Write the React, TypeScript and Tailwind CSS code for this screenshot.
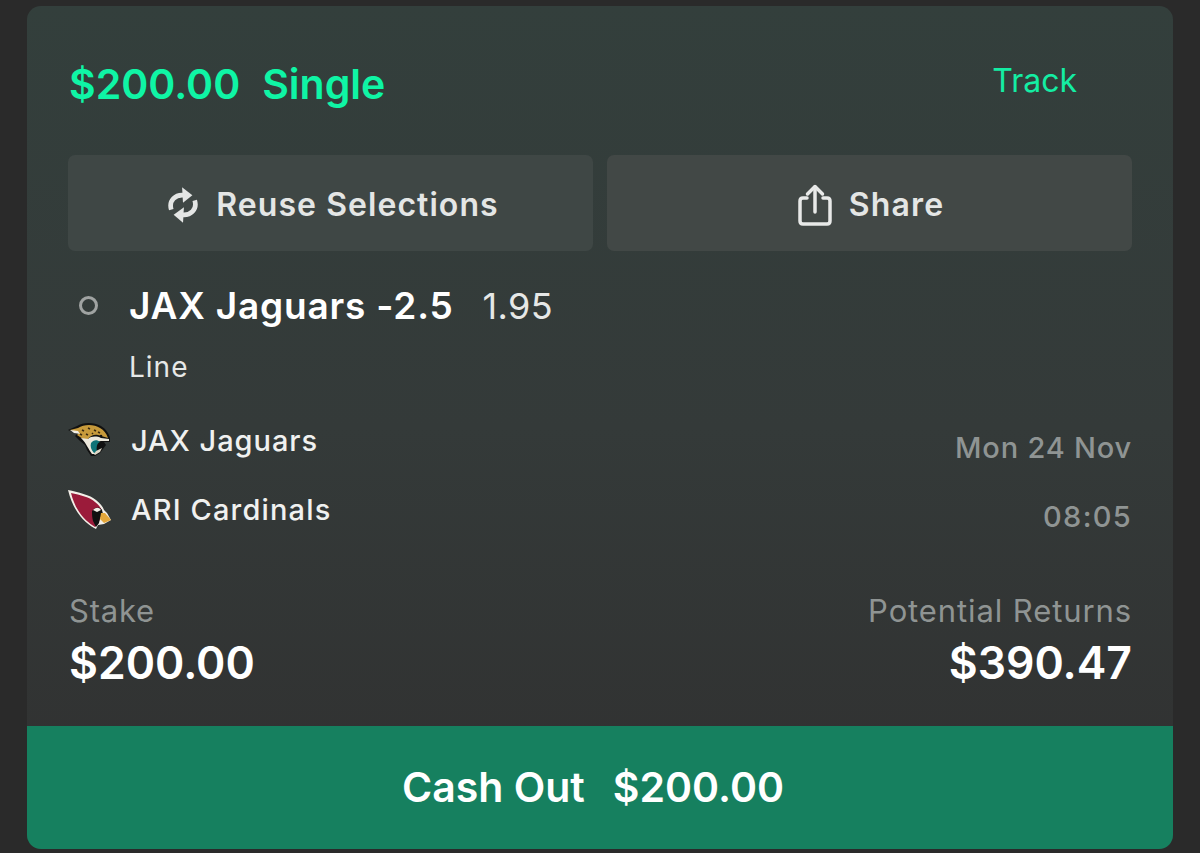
import React from "react";

function Jaguar() {
  return (
    <svg width="44" height="38" viewBox="0 0 44 38" className="shrink-0">
      <path d="M0 9 L9 5 C15 1 26 1 33 5 C38 8 41 13 42 17 L42 21 L36 21 L38 24 L35 28 L32 32 L27 35 L23 35 L19 29 L17 24 L12 20 L7 15 L9 13 Z" fill="#111" />
      <path d="M2 9 L10 7 C16 3 26 3 32 7 C36 9 38 12 40 17 L30 14 C26 13 22 15 20 18 L15 18 L9 14 L11 12 Z" fill="#c79a3b" />
      <path d="M14 9 l2 1 M20 7 l2 1 M26 9 l2 1 M30 11 l2 1 M18 13 l2 1 M24 12 l1 1 M12 13 l2 1" stroke="#3a2a10" strokeWidth="1.6" />
      <path d="M2 9 L10 10 L12 13 L6 12 Z" fill="#f2efe6" />
      <path d="M13 17 L20 18 C23 15 29 15 33 17 L41 18 L41 20 L33 20 C29 20 27 23 27 27 L27 33 L24 33 C20 28 19 23 13 17 Z" fill="#ece8dc" />
      <path d="M23 22 C25 19 29 18 32 21 C29 22 28 26 29 31 L26 32 C23 29 22 25 23 22 Z" fill="#0f7377" />
      <path d="M26 33 L28 30 L34 27 L32 31 L27 34 Z" fill="#ddd8c8" />
      <circle cx="33" cy="15" r="1.3" fill="#111" />
    </svg>
  );
}

function Cardinal() {
  return (
    <svg width="44" height="40" viewBox="0 0 44 40" className="shrink-0">
      <path d="M0 1 C10 3 22 6 28 11 C32 14 35 18 36 21 L39 24 L43 31 L36 35 L30 36 L28 40 C20 36 6 26 0 1 Z" fill="#f3efe8" />
      <path d="M3 4 C12 6 22 8 27 13 C31 16 33 19 34 22 L32 30 L30 35 L27 38 C19 33 8 24 3 4 Z" fill="#9b1b3a" />
      <path d="M24 22 C28 17 32 18 34 21 L35 25 L32 29 L31 34 L28 38 L25 32 C24 28 24 25 24 22 Z" fill="#111" />
      <path d="M25 21 C28 18 31 18 33 21 L29 23 Z" fill="#f3efe8" />
      <path d="M33 24 L37 24 L43 31 L36 34 L32 30 Z" fill="#e4a73a" />
    </svg>
  );
}

function Reuse() {
  return (
    <svg width="30" height="40" viewBox="0 0 32 40" className="shrink-0" fill="none" stroke="#e4e6e5" strokeWidth="5">
      <path d="M3.500 25 C0.500 15 8 8.500 17 9.500" />
      <path d="M28.500 15 C31.500 25 24 31.500 15 30.500" />
      <path d="M15 1 L26 9.500 L16 17.500 Z" fill="#e4e6e5" stroke="none" />
      <path d="M17 22.500 L6 30.500 L16 39 Z" fill="#e4e6e5" stroke="none" />
    </svg>
  );
}

function ShareIcon() {
  return (
    <svg width="34" height="42" viewBox="0 0 34 42" className="shrink-0" fill="none" stroke="#e8e9e8" strokeWidth="3.500" strokeLinecap="round" strokeLinejoin="round">
      <path d="M9 14 H5 Q2 14 2 17 V37 Q2 40 5 40 H29 Q32 40 32 37 V17 Q32 14 29 14 H25" />
      <path d="M17 28 V3" />
      <path d="M9.500 10 L17 2.500 L24.500 10" />
    </svg>
  );
}

export default function App() {
  return (
    <div className="h-[853px] w-[1200px] overflow-hidden bg-[#2a2a2a] px-[27px] pt-[6px] font-['Inter','Liberation_Sans',sans-serif]">
      <div className="flex h-[843px] w-[1146px] flex-col overflow-hidden rounded-[14px] bg-gradient-to-b from-[#333f3c] via-[#343a39] to-[#303030]">
        <div className="flex h-[149px] items-center justify-between pl-[42px] pr-[96px]">
          <div className="mt-[7px] flex gap-[22px] text-[41px] font-semibold leading-none text-[#0ff5a5]">
            <span>$200.00</span>
            <span>Single</span>
          </div>
          <span className="text-[32px] leading-none text-[#14eda3]">Track</span>
        </div>

        <div className="flex gap-[14px] px-[41px]">
          <div className="flex h-[96px] w-[525px] items-center justify-center gap-[18px] rounded-[7px] bg-[#3f4745] pl-[6px] pt-[3px] text-[32px] font-semibold tracking-[1.05px] text-[#e4e6e5]">
            <Reuse />
            <span>Reuse Selections</span>
          </div>
          <div className="flex h-[96px] w-[525px] items-center justify-center gap-[17px] rounded-[7px] bg-[#424846] pl-[3px] pt-[3px] text-[32px] font-semibold tracking-[1.2px] text-[#e4e6e5]">
            <ShareIcon />
            <span>Share</span>
          </div>
        </div>

        <div className="flex flex-col pl-[52px] pr-[41px] pt-[36px]">
          <div className="flex items-center leading-none">
            <span className="h-[19px] w-[19px] rounded-full border-[3px] border-[#a0a3a2]" />
            <span className="ml-[31px] text-[37px] font-semibold tracking-[0.8px] text-white">JAX Jaguars -2.5</span>
            <span className="ml-[29px] text-[36px] tracking-[0.4px] text-[#e6e8e7]">1.95</span>
          </div>
          <span className="ml-[50px] mt-[29px] text-[28px] leading-[29px] tracking-[1px] text-[#e6e8e7]">Line</span>
        </div>

        <div className="flex justify-between px-[41px] pt-[39px]">
          <div className="flex flex-col gap-[30px]">
            <div className="flex h-[38px] items-center gap-[19px]">
              <Jaguar />
              <span className="text-[29px] font-medium leading-none tracking-[0.95px] text-[#f0f1f0]">JAX Jaguars</span>
            </div>
            <div className="flex h-[40px] items-center gap-[19px]">
              <Cardinal />
              <span className="text-[29px] font-medium leading-none tracking-[1.15px] text-[#f0f1f0]">ARI Cardinals</span>
            </div>
          </div>
          <div className="flex flex-col items-end gap-[40px] pt-[12px] text-[29px] font-medium leading-none tracking-[0.8px] text-[#8f9493]">
            <span>Mon 24 Nov</span>
            <span className="tracking-[1.3px]">08:05</span>
          </div>
        </div>

        <div className="flex justify-between pl-[42px] pr-[41px] pt-[64px]">
          <div className="flex flex-col">
            <span className="text-[31px] leading-none tracking-[0.8px] text-[#8f9493]">Stake</span>
            <span className="mt-[15px] text-[44.500px] font-semibold leading-none text-white">$200.00</span>
          </div>
          <div className="flex flex-col items-end">
            <span className="text-[31px] leading-none tracking-[0.9px] text-[#8f9493]">Potential Returns</span>
            <span className="mt-[15px] text-[44.500px] font-semibold leading-none text-white">$390.47</span>
          </div>
        </div>

        <div className="mt-auto flex h-[123px] items-center justify-center gap-[28px] bg-[#16805f] pr-[14px] text-[41px] font-semibold text-white">
          <span>Cash Out</span>
          <span>$200.00</span>
        </div>
      </div>
    </div>
  );
}
